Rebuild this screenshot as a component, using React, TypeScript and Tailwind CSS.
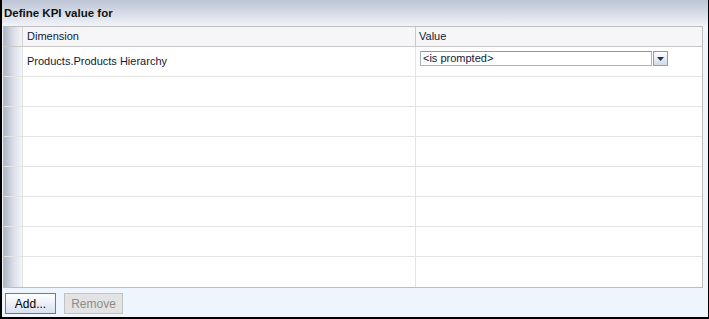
import { ReactNode } from "react";

type RowProps = {
  dimension?: ReactNode;
  value?: ReactNode;
  last?: boolean;
};

function KpiRow({ dimension, value, last }: RowProps) {
  return (
    <div
      className={`flex h-[30px] ${
        last ? "h-[29px]" : "border-b border-[#e3e3e3]"
      }`}
    >
      <div className="w-[19px] border-r border-[#e3e3e3] bg-gradient-to-r from-[#aeb6c5] via-[#d9dde6] to-[#f4f5f8]" />
      <div className="flex w-[393px] items-center border-r border-[#e3e3e3] bg-white pl-[4px] text-[#0f1a3a]">
        {dimension}
      </div>
      <div className="flex flex-1 items-start bg-white">{value}</div>
    </div>
  );
}

function PromptSelect() {
  return (
    <div className="ml-[4px] mt-[4px] flex items-start">
      <div className="flex h-[15px] w-[232px] items-center border border-[#a9b3bf] border-t-[#8d96a2] bg-white pl-[2px] text-[#0f1a3a]">
        &lt;is prompted&gt;
      </div>
      <div className="ml-px flex h-[15px] w-[15px] items-center justify-center border border-[#8e9db2] bg-gradient-to-b from-[#ffffff] to-[#d2dae6]">
        <svg width="7" height="4" viewBox="0 0 7 4">
          <path d="M0 0 H7 L3.5 4 Z" fill="#1d3652" />
        </svg>
      </div>
    </div>
  );
}

export default function App() {
  const emptyRows = Array.from({ length: 7 });

  return (
    <div
      className="flex h-[319px] w-[709px] flex-col border-b-2 border-l-2 border-r border-black bg-[#eef5fd] text-[11px] text-black"
      style={{ fontFamily: '"Liberation Sans", Arial, sans-serif' }}
    >
      <div className="flex h-[26px] items-start bg-gradient-to-b from-[#bcc5d5] to-[#f1f3f8] pl-[2px] pt-[5px] text-[11.5px] font-bold text-[#111]">
        Define KPI value for
      </div>

      <div className="ml-px mr-[5px] flex flex-col border border-[#bdbdbd]">
        <div className="flex h-[20px] border-b border-[#c9c9c9]">
          <div className="w-[19px] border-r border-[#d6d6d6] bg-gradient-to-r from-[#aeb6c5] via-[#d9dde6] to-[#f4f5f8]" />
          <div className="flex w-[393px] items-center border-r border-[#c9c9c9] bg-[#f6f6f8] pl-[4px] text-[#0f1a3a]">
            Dimension
          </div>
          <div className="flex flex-1 items-center bg-[#f6f6f8] pl-[3px] text-[#0f1a3a]">
            Value
          </div>
        </div>
        <KpiRow
          dimension="Products.Products Hierarchy"
          value={<PromptSelect />}
        />
        {emptyRows.map((_, i) => (
          <KpiRow key={i} last={i === emptyRows.length - 1} />
        ))}
      </div>

      <div className="flex items-start gap-[8px] pl-[3px] pt-[5px]">
        <button className="h-[21px] w-[51px] border border-[#6d7a93] bg-gradient-to-b from-[#ffffff] to-[#d9e0ee] text-[12px] text-black">
          Add...
        </button>
        <button
          disabled
          className="h-[21px] w-[59px] border border-[#c3c3c3] bg-[#e3e3e3] text-[12px] text-[#8d8d8d]"
        >
          Remove
        </button>
      </div>
    </div>
  );
}
